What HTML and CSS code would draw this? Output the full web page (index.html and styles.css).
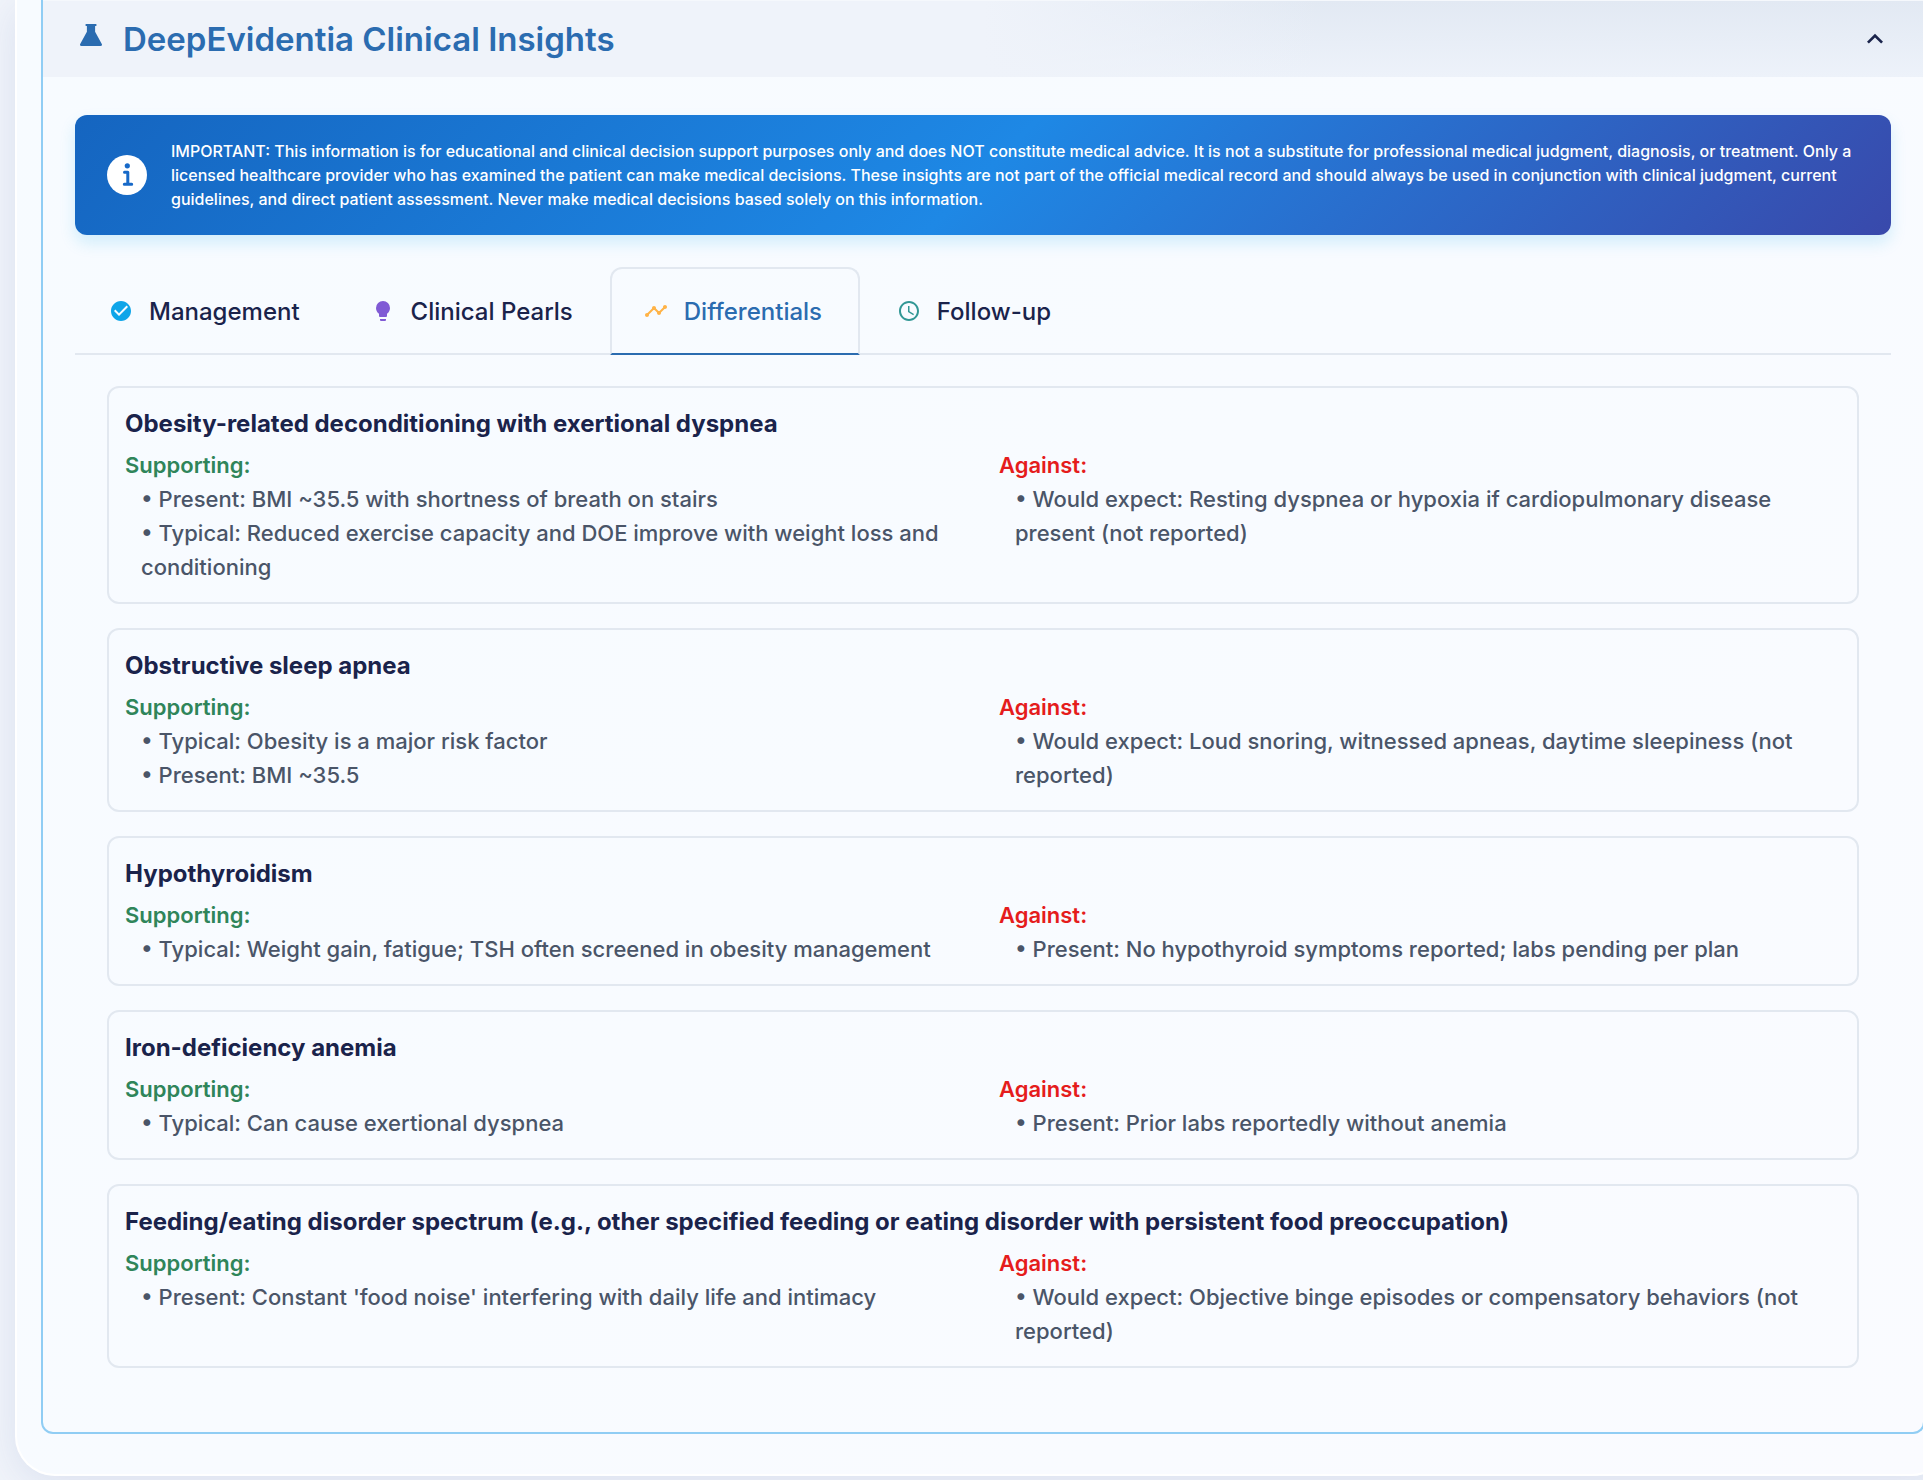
FILE: index.html
```html
<!DOCTYPE html>
<html lang="en">
<head>
<meta charset="utf-8">
<meta name="viewport" content="width=device-width, initial-scale=1">
<title>DeepEvidentia Clinical Insights</title>
<link rel="stylesheet" href="styles.css">
</head>
<body>
<main class="sheet">
  <section class="panel">
    <h2 class="panel-heading">
      <button class="panel-toggle" type="button" aria-expanded="true">
        <svg class="flask" viewBox="0 0 24 24" aria-hidden="true"><path d="M6.6 1h10.8v2h-1.3v5.8L22.8 21c.6 1-.1 2-1.200 2H2.400c-1.100 0-1.800-1-1.200-2L7.900 8.800V3H6.600z"/></svg>
        <span class="panel-title">DeepEvidentia Clinical Insights</span>
        <svg class="chevron" viewBox="0 0 24 24" aria-hidden="true"><path d="M12 8l-6 6 1.410 1.410L12 10.830l4.590 4.580L18 14z"/></svg>
      </button>
    </h2>
    <div class="panel-body">
      <div class="notice" role="note">
        <svg class="notice-icon" viewBox="0 0 40 40" aria-hidden="true"><circle cx="20" cy="20" r="20" fill="#fff"/><circle cx="20.300" cy="10.800" r="2.600" fill="#1769c8"/><path d="M17.500 17.300h3.300v11.500M17.300 29.300h7.400" fill="none" stroke="#1769c8" stroke-width="3" stroke-linecap="round" stroke-linejoin="round"/></svg>
        <p class="notice-text">IMPORTANT: This information is for educational and clinical decision support purposes only and does NOT constitute medical advice. It is not a substitute for professional medical judgment, diagnosis, or treatment. Only a licensed healthcare provider who has examined the patient can make medical decisions. These insights are not part of the official medical record and should always be used in conjunction with clinical judgment, current guidelines, and direct patient assessment. Never make medical decisions based solely on this information.</p>
      </div>

      <div class="tabs" role="tablist">
        <button class="tab" type="button" role="tab" aria-selected="false">
          <svg class="tab-icon blue" viewBox="0 0 24 24" aria-hidden="true"><path d="M12 2C6.480 2 2 6.480 2 12s4.480 10 10 10 10-4.480 10-10S17.520 2 12 2zm-2 15l-5-5 1.410-1.410L10 14.170l7.590-7.590L19 8l-9 9z"/></svg>Management</button>
        <button class="tab" type="button" role="tab" aria-selected="false">
          <svg class="tab-icon purple" viewBox="0 0 24 24" aria-hidden="true"><path d="M12 2a7 7 0 0 0-7 7c0 2.380 1.190 4.470 3 5.740V17a1 1 0 0 0 1 1h6a1 1 0 0 0 1-1v-2.260c1.810-1.270 3-3.360 3-5.740a7 7 0 0 0-7-7zM9 21a1 1 0 0 0 1 1h4a1 1 0 0 0 1-1v-1H9v1z"/></svg>Clinical Pearls</button>
        <button class="tab active" type="button" role="tab" aria-selected="true">
          <svg class="tab-icon orange" viewBox="0 0 24 24" aria-hidden="true"><path d="M23 8c0 1.100-.9 2-2 2-.18 0-.35-.02-.51-.07l-3.560 3.550c.05.16.07.34.07.52 0 1.100-.9 2-2 2s-2-.9-2-2c0-.18.02-.36.07-.52l-2.550-2.550c-.16.05-.34.07-.52.07s-.36-.02-.52-.07l-4.550 4.560c.05.16.07.33.07.51 0 1.100-.9 2-2 2s-2-.9-2-2 .9-2 2-2c.18 0 .35.02.51.07l4.560-4.550C8.020 9.360 8 9.180 8 9c0-1.100.9-2 2-2s2 .9 2 2c0 .18-.02.36-.07.52l2.550 2.550c.16-.05.34-.07.52-.07s.36.02.52.07l3.550-3.560C19.020 8.350 19 8.180 19 8c0-1.100.9-2 2-2s2 .9 2 2z"/></svg>Differentials</button>
        <button class="tab" type="button" role="tab" aria-selected="false">
          <svg class="tab-icon teal" viewBox="0 0 24 24" aria-hidden="true"><path d="M11.990 2C6.470 2 2 6.480 2 12s4.470 10 9.990 10C17.520 22 22 17.520 22 12S17.520 2 11.990 2zM12 20c-4.420 0-8-3.580-8-8s3.580-8 8-8 8 3.580 8 8-3.580 8-8 8zm.5-13H11v6l5.250 3.150.75-1.230-4.500-2.670z"/></svg>Follow-up</button>
      </div>

      <div class="cards" role="tabpanel">
        <article class="card">
          <h3 class="card-title">Obesity-related deconditioning with exertional dyspnea</h3>
          <div class="evidence">
            <div>
              <h4 class="label supporting">Supporting:</h4>
              <ul class="points">
                <li>• Present: BMI ~35.5 with shortness of breath on stairs</li>
                <li>• Typical: Reduced exercise capacity and DOE improve with weight loss and conditioning</li>
              </ul>
            </div>
            <div>
              <h4 class="label against">Against:</h4>
              <ul class="points">
                <li>• Would expect: Resting dyspnea or hypoxia if cardiopulmonary disease present (not reported)</li>
              </ul>
            </div>
          </div>
        </article>
        <article class="card">
          <h3 class="card-title">Obstructive sleep apnea</h3>
          <div class="evidence">
            <div>
              <h4 class="label supporting">Supporting:</h4>
              <ul class="points">
                <li>• Typical: Obesity is a major risk factor</li>
                <li>• Present: BMI ~35.5</li>
              </ul>
            </div>
            <div>
              <h4 class="label against">Against:</h4>
              <ul class="points">
                <li>• Would expect: Loud snoring, witnessed apneas, daytime sleepiness (not reported)</li>
              </ul>
            </div>
          </div>
        </article>
        <article class="card">
          <h3 class="card-title">Hypothyroidism</h3>
          <div class="evidence">
            <div>
              <h4 class="label supporting">Supporting:</h4>
              <ul class="points">
                <li>• Typical: Weight gain, fatigue; TSH often screened in obesity management</li>
              </ul>
            </div>
            <div>
              <h4 class="label against">Against:</h4>
              <ul class="points">
                <li>• Present: No hypothyroid symptoms reported; labs pending per plan</li>
              </ul>
            </div>
          </div>
        </article>
        <article class="card">
          <h3 class="card-title">Iron-deficiency anemia</h3>
          <div class="evidence">
            <div>
              <h4 class="label supporting">Supporting:</h4>
              <ul class="points">
                <li>• Typical: Can cause exertional dyspnea</li>
              </ul>
            </div>
            <div>
              <h4 class="label against">Against:</h4>
              <ul class="points">
                <li>• Present: Prior labs reportedly without anemia</li>
              </ul>
            </div>
          </div>
        </article>
        <article class="card">
          <h3 class="card-title">Feeding/eating disorder spectrum (e.g., other specified feeding or eating disorder with persistent food preoccupation)</h3>
          <div class="evidence">
            <div>
              <h4 class="label supporting">Supporting:</h4>
              <ul class="points">
                <li>• Present: Constant 'food noise' interfering with daily life and intimacy</li>
              </ul>
            </div>
            <div>
              <h4 class="label against">Against:</h4>
              <ul class="points">
                <li>• Would expect: Objective binge episodes or compensatory behaviors (not reported)</li>
              </ul>
            </div>
          </div>
        </article>
      </div>
    </div>
  </section>
</main>
</body>
</html>
```
FILE: styles.css
```css
* {
  box-sizing: border-box;
}

html {
  overflow: hidden;
}

body {
  margin: 0;
  overflow: hidden;
  background: #f1f4fa;
  color: #1a234b;
  font-family: Inter, "Liberation Sans", sans-serif;
}

h2, h3, h4, p, ul {
  margin: 0;
  padding: 0;
}

/* The sheet is wider than the window and runs off its right edge. */
.sheet {
  margin: 0 -28px 16px 15px;
  padding: 0 24px 40px;
  border: solid #fff;
  border-width: 0 2px 2px;
  border-radius: 0 0 40px 40px;
  background: linear-gradient(135deg, #f7fbff 0%, #f8fbff 50%, #fafbff 100%);
  box-shadow: 0 8px 40px rgba(70, 100, 170, 0.13);
}

.panel {
  border: solid #90cdf4;
  border-width: 0 2px 2px;
  border-radius: 0 0 12px 12px;
}

.panel-heading {
  border-top: 1px solid #f5f8fc;
}

.panel-toggle {
  display: flex;
  align-items: center;
  width: 100%;
  height: 76px;
  padding: 0 32px;
  border: 0;
  background: linear-gradient(90deg, #eff3fa 0%, #eff3fa 50%, rgba(239, 243, 250, 0) 68%), linear-gradient(180deg, #e2e9f3, #edf2fa);
  color: #2b6cb0;
  font-family: Inter, "Liberation Sans", sans-serif;
  font-size: 33px;
  font-weight: 600;
  line-height: 40px;
  text-align: left;
}

.flask {
  width: 32px;
  height: 24px;
  margin-right: 16px;
  margin-bottom: 8px;
  fill: #2b6cb0;
}

.panel-title {
  flex: 1;
}

.chevron {
  width: 32px;
  height: 32px;
  fill: #1a234b;
}

.panel-body {
  padding: 38px 32px 32px;
}

.notice {
  display: flex;
  align-items: center;
  gap: 24px;
  padding: 24px 32px;
  border-radius: 12px;
  background: linear-gradient(135deg, #1565c0 0%, #1e88e5 50%, #3949ab 100%);
  box-shadow: 0 8px 16px rgba(14, 165, 233, 0.16);
  color: #fff;
}

.notice-icon {
  flex: none;
  width: 40px;
  height: 40px;
}

.notice-text {
  font-size: 16px;
  font-weight: 500;
  line-height: 24px;
}

.tabs {
  display: flex;
  gap: 3px;
  margin-top: 32px;
  border-bottom: 2px solid #e2e8f0;
}

.tab {
  display: flex;
  align-items: center;
  gap: 16px;
  min-width: 250px;
  height: 88px;
  margin-bottom: -2px;
  padding: 0 32px;
  border: 2px solid transparent;
  border-radius: 12px 12px 0 0;
  background: none;
  color: #1a234b;
  font-family: Inter, "Liberation Sans", sans-serif;
  font-size: 24px;
  font-weight: 500;
}

.tab.active {
  border-color: #e2e8f0;
  border-bottom-color: #2b6cb0;
  color: #2b6cb0;
}

.tab-icon {
  width: 24px;
  height: 24px;
}

.blue {
  fill: #0ea5e9;
}

.purple {
  fill: #805ad5;
}

.orange {
  fill: #ffb347;
}

.teal {
  fill: #319795;
}

.cards {
  display: flex;
  flex-direction: column;
  gap: 24px;
  padding: 31px 32px 32px;
}

.card {
  padding: 16px 16px 18px;
  border: 2px solid #e2e8f0;
  border-radius: 12px;
}

.card-title {
  margin-bottom: 4px;
  font-size: 24px;
  font-weight: 700;
  line-height: 40px;
}

.evidence {
  display: grid;
  grid-template-columns: 1fr 1fr;
  gap: 32px;
}

.label {
  font-size: 22px;
  font-weight: 600;
  line-height: 34px;
}

.supporting {
  color: #2f855a;
}

.against {
  color: #e51c1c;
}

.points {
  padding-left: 16px;
  color: #4a5568;
  font-size: 22px;
  font-weight: 500;
  line-height: 34px;
  list-style: none;
}
```
